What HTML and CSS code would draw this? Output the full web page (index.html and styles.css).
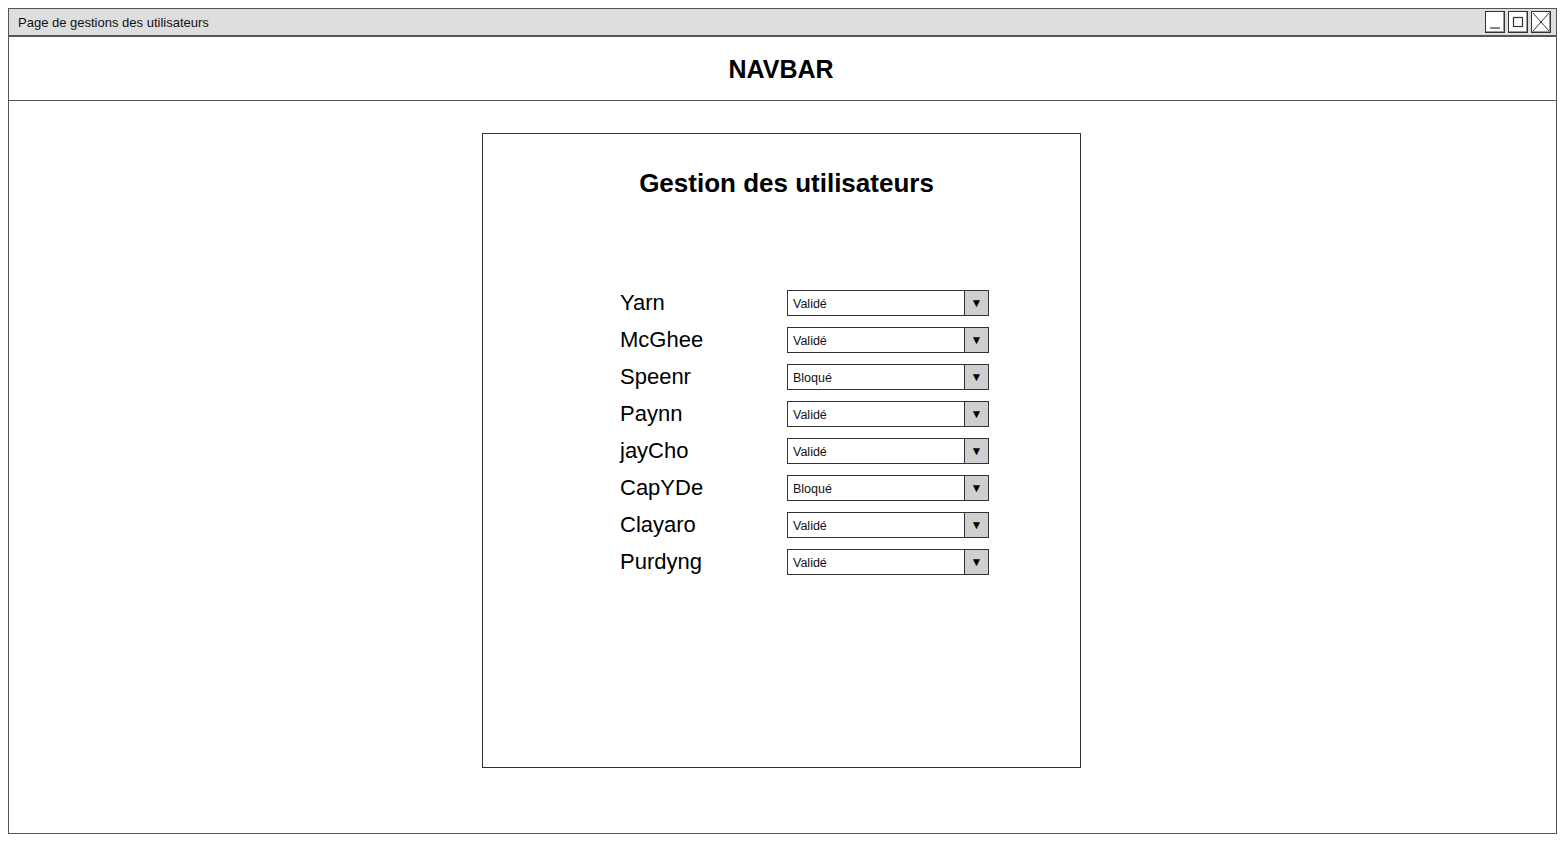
FILE: index.html
```html
<!DOCTYPE html>
<html lang="fr">
<head>
<meta charset="utf-8">
<title>Page de gestions des utilisateurs</title>
<link rel="stylesheet" href="styles.css">
</head>
<body>
<div class="window">
  <div class="titlebar">
    <span class="title-text">Page de gestions des utilisateurs</span>
    <div class="win-buttons">
      <span class="wbtn"><svg width="18" height="20" viewBox="0 0 18 20"><line x1="4" y1="16" x2="14" y2="16" stroke="#333" stroke-width="1.2"/></svg></span>
      <span class="wbtn"><svg width="18" height="20" viewBox="0 0 18 20"><rect x="4.5" y="5.5" width="9" height="9" fill="none" stroke="#333" stroke-width="1.2"/></svg></span>
      <span class="wbtn"><svg width="18" height="20" viewBox="0 0 18 20"><line x1="1" y1="1" x2="17" y2="19" stroke="#333" stroke-width="1"/><line x1="17" y1="1" x2="1" y2="19" stroke="#333" stroke-width="1"/></svg></span>
    </div>
  </div>
  <div class="navbar">NAVBAR</div>
  <div class="content">
    <div class="card">
      <h1 class="card-title">Gestion des utilisateurs</h1>
      <div class="user-list">
        <div class="user-row"><span class="user-name">Yarn</span><div class="select"><span class="select-value">Validé</span><span class="select-arrow">▼</span></div></div>
        <div class="user-row"><span class="user-name">McGhee</span><div class="select"><span class="select-value">Validé</span><span class="select-arrow">▼</span></div></div>
        <div class="user-row"><span class="user-name">Speenr</span><div class="select"><span class="select-value">Bloqué</span><span class="select-arrow">▼</span></div></div>
        <div class="user-row"><span class="user-name">Paynn</span><div class="select"><span class="select-value">Validé</span><span class="select-arrow">▼</span></div></div>
        <div class="user-row"><span class="user-name">jayCho</span><div class="select"><span class="select-value">Validé</span><span class="select-arrow">▼</span></div></div>
        <div class="user-row"><span class="user-name">CapYDe</span><div class="select"><span class="select-value">Bloqué</span><span class="select-arrow">▼</span></div></div>
        <div class="user-row"><span class="user-name">Clayaro</span><div class="select"><span class="select-value">Validé</span><span class="select-arrow">▼</span></div></div>
        <div class="user-row"><span class="user-name">Purdyng</span><div class="select"><span class="select-value">Validé</span><span class="select-arrow">▼</span></div></div>
      </div>
    </div>
  </div>
</div>
</body>
</html>
```

FILE: styles.css
```css
* { box-sizing: border-box; }
html, body { margin: 0; padding: 0; background: #fff; }
body { padding: 8px; font-family: "Liberation Sans", Arial, sans-serif; color: #000; }

.window {
  width: 1549px;
  height: 826px;
  border: 1px solid #555;
  display: flex;
  flex-direction: column;
  background: #fff;
}

.titlebar {
  height: 28px;
  flex: none;
  background: #dedede;
  border-bottom: 2px solid #555;
  display: flex;
  align-items: center;
  justify-content: space-between;
  padding: 0 5px 0 9px;
}
.title-text {
  font-family: "Liberation Sans", Arial, sans-serif;
  font-size: 13px;
  color: #111;
}
.win-buttons { display: flex; gap: 3px; align-items: center; }
.wbtn {
  width: 20px;
  height: 22px;
  border: 1px solid #333;
  background: #fff;
  display: flex;
  align-items: center;
  justify-content: center;
  box-shadow: inset -1px -1px 0 #999;
}
.wbtn svg { display: block; }

.navbar {
  height: 64px;
  flex: none;
  border-bottom: 1px solid #555;
  display: flex;
  align-items: center;
  justify-content: center;
  font-weight: bold;
  font-size: 25px;
  padding: 1px 3px 0 0;
}

.content {
  flex: 1;
  display: flex;
  justify-content: center;
  padding-top: 32px;
}

.card {
  width: 599px;
  height: 635px;
  border: 1px solid #333;
  display: flex;
  flex-direction: column;
  margin-left: -2px;
}
.card-title {
  margin: 34px 0 0 10px;
  font-size: 26px;
  line-height: 30px;
  font-weight: bold;
  text-align: center;
}

.user-list {
  margin-top: 92px;
  padding-left: 137px;
  display: flex;
  flex-direction: column;
  gap: 12px;
}
.user-row {
  display: grid;
  grid-template-columns: 167px 202px;
  align-items: center;
  height: 25px;
}
.user-name {
  font-size: 22px;
  line-height: 25px;
  margin-top: -2px;
}
.select {
  height: 26px;
  border: 1px solid #333;
  display: flex;
  align-items: stretch;
  background: #fff;
}
.select-value {
  flex: 1;
  font-size: 12.5px;
  padding-left: 5px;
  display: flex;
  align-items: center;
  padding-top: 2px;
  color: #111;
}
.select-arrow {
  width: 24px;
  background: #cfcfcf;
  border-left: 1px solid #333;
  font-size: 12px;
  display: flex;
  align-items: center;
  justify-content: center;
}
```
